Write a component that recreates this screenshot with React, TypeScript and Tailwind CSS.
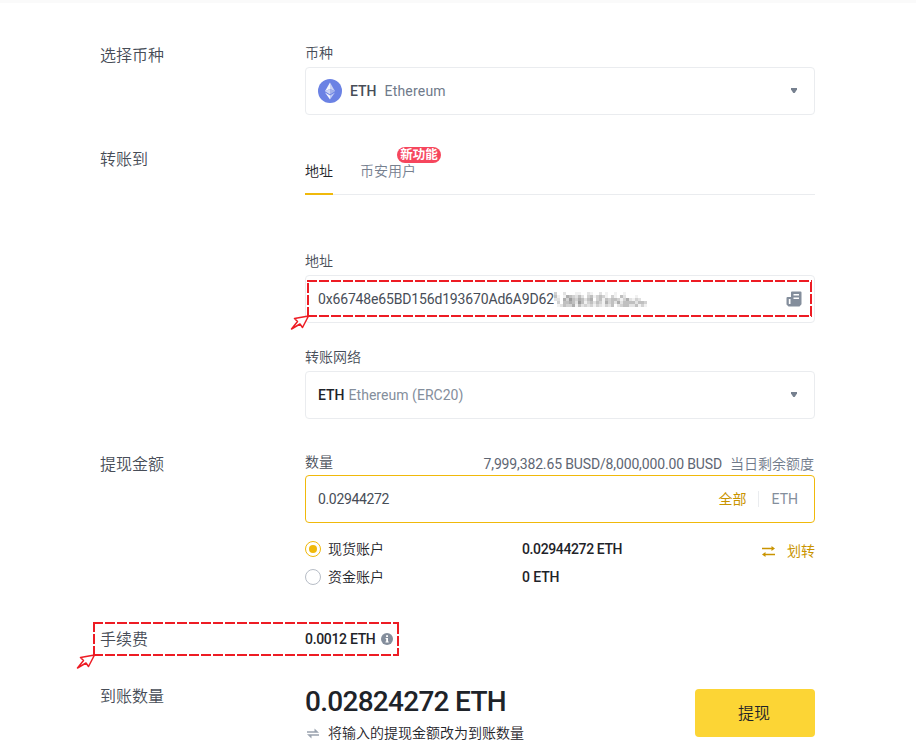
import React from "react";

const cjk = "font-['Roboto','Noto_Sans_CJK_SC',sans-serif]";

function Section({ title, className, children }: { title: string; className: string; children: React.ReactNode }) {
  return (
    <section className={`flex w-[715px] shrink-0 ${className}`}>
      <h2 className="w-[205px] shrink-0 pt-px text-base leading-6 font-[350] text-[#474d57]">{title}</h2>
      <div className="w-[510px] shrink-0">{children}</div>
    </section>
  );
}

function Caret() {
  return (
    <svg className="mr-[17px] mb-px ml-auto h-[5px] w-[6px] shrink-0" viewBox="0 0 6 5">
      <path d="M0 0h6v1.500L3.700 5H2.300L0 1.500z" fill="#76808f" />
    </svg>
  );
}

function EthLogo() {
  return (
    <svg className="size-6" viewBox="0 0 24 24">
      <circle cx="12" cy="12" r="12" fill="#6b82e4" />
      <path d="M12 3.500v6.400l5 2.400z" fill="#c9d1f3" />
      <path d="M12 3.500L7 12.300l5-2.400z" fill="#f3f5fd" />
      <path d="M12 15.400l5-3.100-5-2.400z" fill="#a3b1ea" />
      <path d="M7 12.300l5 3.100V9.900z" fill="#cdd5f5" />
      <path d="M12 16.400v4.200l5-7.200z" fill="#c0cbf6" />
      <path d="M12 20.600v-4.200l-5-3z" fill="#f3f5fd" />
    </svg>
  );
}

const mosaic = [
  "3002000110021002010010010000000",
  "4101543242034134310310420001000",
  "2205364354245034143443135213200",
  "0304454264134243153425244442443",
  "0124335142323132132402344224131",
];
const tones = ["#ffffff", "#f1f1f1", "#e2e2e2", "#d2d2d2", "#c0c0c0", "#aeaeae", "#9c9c9c"];

function Mosaic() {
  return (
    <svg className="h-[15px] w-[93px]" viewBox="0 0 93 15" shapeRendering="crispEdges">
      {mosaic.map((row, y) =>
        row.split("").map((c, x) => <rect key={`${x}-${y}`} x={x * 3} y={y * 3} width="3" height="3" fill={tones[+c]} />)
      )}
    </svg>
  );
}

function Callout({ className, w, h }: { className: string; w: number; h: number }) {
  return (
    <svg className={`pointer-events-none absolute overflow-visible ${className}`} width={w} height={h}>
      <path d={`M0 1H${w}M0 ${h - 1}H${w}`} stroke="#ed1c24" strokeWidth="2" strokeDasharray="10 2" shapeRendering="crispEdges" />
      <path d={`M1 ${h}V0M${w - 1} 2V${h}`} stroke="#ed1c24" strokeWidth="2" strokeDasharray="10 2" shapeRendering="crispEdges" />
      <path
        d={`M1.500 ${h - 1}L-12.500 ${h + 1.5}L-9.500 ${h + 4.5}L-15.500 ${h + 12}L-7 ${h + 7}L-4.500 ${h + 10.500}Z`}
        fill="#fff"
        stroke="#ed1c24"
        strokeWidth="1.500"
        strokeLinejoin="round"
      />
    </svg>
  );
}

const label = "h-5 text-sm leading-5 font-[350] text-[#474d57]";
const box = "mt-1 flex h-12 items-center rounded border border-[#eaecef] pl-3 text-sm";

export default function App() {
  return (
    <main className={`relative flex h-[743px] w-[916px] flex-col overflow-hidden bg-white pl-[100px] ${cjk}`}>
      <div className="-ml-[100px] h-[3px] w-[916px] shrink-0 bg-[#fafafa]" />
      <Section title="选择币种" className="mt-10 h-[104px]">
        <div className={label}>币种</div>
        <div className={box}>
          <EthLogo />
          <span className="ml-2 font-medium text-[#474d57]">ETH</span>
          <span className="ml-2 tracking-[0.2px] text-[#707a8a]">Ethereum</span>
          <Caret />
        </div>
      </Section>

      <Section title="转账到" className="h-[304px]">
        <div className="flex h-12 border-b border-[#eaecef] text-sm leading-[48px] font-[350]">
          <div className="h-12 w-7 border-b-2 border-[#f0b90b] text-[#1e2329]">地址</div>
          <div className="relative ml-7 text-[#76808f]">
            <span className="-ml-px">币安用户</span>
            <span className="absolute top-0 left-9 flex h-4 w-11 items-center justify-center rounded-full bg-[#f6465d] text-[12.5px] leading-4 font-bold text-white">
              新功能
            </span>
          </div>
        </div>
        <div className={`mt-14 ${label}`}>地址</div>
        <div className={box}>
          <span className="tracking-[-0.16px] text-[#474d57]">0x66748e65BD156d193670Ad6A9D62</span>
          <Mosaic />
          <svg className="mr-3 ml-auto h-4 w-4" viewBox="0 0 16 16">
            <path d="M5 1.500Q5 .5 6 .5h8.500q1 0 1 1v11.800L13.500 15.500h-11L.5 13.500V7q0-1 1-1H5z" fill="#848e9c" />
            <path d="M7.500 3h5.500v1.500H7.500zM7.500 6.500h5.500V8H7.500zM2.800 8H4.500v5H2.800z" fill="#fff" />
          </svg>
        </div>
        <div className={`mt-6 ${label}`}>转账网络</div>
        <div className={box}>
          <span className="font-medium text-[#1e2329]">ETH</span>
          <span className="ml-1 tracking-[0.04px] text-[#848e9c]">Ethereum (ERC20)</span>
          <Caret />
        </div>
      </Section>

      <Section title="提现金额" className="h-44 pt-px">
        <div className={`flex justify-between ${label}`}>
          <span>数量</span>
          <span className="flex pt-0.5 pr-px">
            <span className="font-normal tracking-[-0.14px] text-[#5e6673]">7,999,382.65 BUSD/8,000,000.00 BUSD</span>
            <span className="ml-2 text-[#707a8a]">当日剩余额度</span>
          </span>
        </div>
        <div className="mt-[3px] flex h-12 items-center rounded border border-[#f0b90b] pr-4 pl-3 text-sm">
          <span className="tracking-[-0.35px] text-[#474d57]">0.02944272</span>
          <span className="ml-auto text-[#c99400]">全部</span>
          <span className="ml-[11px] h-4 w-px bg-[#eaecef]" />
          <span className="ml-[13px] text-[#848e9c]">ETH</span>
        </div>
        <div className="mt-3 flex text-sm text-[#1e2329]">
          <div className="w-[217px]">
            <div className="flex h-7 items-center gap-[7px] font-[350]">
              <span className="flex size-4 items-center justify-center rounded-full border border-[#f0b90b]">
                <span className="size-2 rounded-full bg-[#f0b90b]" />
              </span>
              现货账户
            </div>
            <div className="flex h-7 items-center gap-[7px] font-[350]">
              <span className="size-4 rounded-full border border-[#b7bdc6]" />
              资金账户
            </div>
          </div>
          <div className="leading-7 font-medium">
            <div className="tracking-[-0.38px]">0.02944272 ETH</div>
            <div className="tracking-[-0.1px]">0 ETH</div>
          </div>
          <div className="ml-auto flex h-8 items-center gap-3 text-[#c99400]">
            <svg className="h-[11px] w-[13px]" viewBox="0 0 13 11">
              <path d="M0 2.500h10M3 8.500h10" stroke="#c99400" strokeWidth="1.700" />
              <path d="M9.500 0v5L13 2.500zM3.500 6v5L0 8.500z" fill="#c99400" />
            </svg>
            划转
          </div>
        </div>
      </Section>

      <Section title="手续费" className="h-[57px]">
        <div className="flex h-6 items-center text-sm font-medium text-[#1e2329]">
          <span className="tracking-[-0.32px]">0.0012 ETH</span>
          <svg className="ml-1.5 size-3" viewBox="0 0 12 12">
            <circle cx="6" cy="6" r="6" fill="#848e9c" />
            <path d="M5.100 2.300h1.900v1.600H5.100zM4.600 5h2.400v3.500h.7v1.100H4.500V8.500h.7V6.100h-.6z" fill="#fff" />
          </svg>
        </div>
      </Section>

      <Section title="到账数量" className="h-[59px]">
        <div className="flex justify-between">
          <div>
            <div className="h-9 text-[28px] leading-9 font-medium tracking-[-0.72px] text-[#1e2329]">0.02824272 ETH</div>
            <div className="mt-[3px] flex h-5 items-center text-sm leading-5 font-[350] text-[#1e2329]">
              <svg className="mr-[9px] ml-0.5 h-[11px] w-3" viewBox="0 0 12 11">
                <path d="M0 4.700V3.300h7.500V.5L12 4.700zM12 6.300v1.400H4.500L4.500 10.500L0 6.300z" fill="#9aa3af" />
              </svg>
              将输入的提现金额改为到账数量
            </div>
          </div>
          <button className="mt-[5px] h-12 w-[120px] rounded bg-[#fcd535] pt-0.5 pr-0.5 text-base font-[350] text-[#1e2329]">提现</button>
        </div>
      </Section>

      <Callout className="top-[280px] left-[307px]" w={505} h={37} />
      <Callout className="top-[622px] left-[93px]" w={306} h={34} />
    </main>
  );
}
